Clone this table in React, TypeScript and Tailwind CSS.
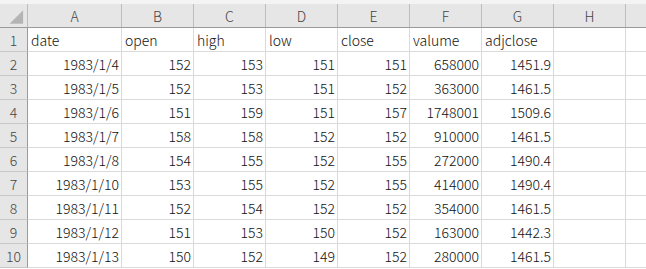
const COLS = ["A", "B", "C", "D", "E", "F", "G", "H", ""];
const WIDTHS = ["w-[94px]", "w-[72px]", "w-[72px]", "w-[72px]", "w-[72px]", "w-[72px]", "w-[72px]", "w-[72px]", "w-[40px]"];

const header = ["date", "open", "high", "low", "close", "valume", "adjclose"];

const rows: string[][] = [
  ["1983/1/4", "152", "153", "151", "151", "658000", "1451.9"],
  ["1983/1/5", "152", "153", "151", "152", "363000", "1461.5"],
  ["1983/1/6", "151", "159", "151", "157", "1748001", "1509.6"],
  ["1983/1/7", "158", "158", "152", "152", "910000", "1461.5"],
  ["1983/1/8", "154", "155", "152", "155", "272000", "1490.4"],
  ["1983/1/10", "153", "155", "152", "155", "414000", "1490.4"],
  ["1983/1/11", "152", "154", "152", "152", "354000", "1461.5"],
  ["1983/1/12", "151", "153", "150", "152", "163000", "1442.3"],
  ["1983/1/13", "150", "152", "149", "152", "280000", "1461.5"],
];

function RowHead({ n }: { n: number }) {
  return (
    <div className="w-[28px] shrink-0 h-[24px] bg-[#e6e6e6] border-r border-r-[#9b9b9b] border-b border-b-[#c8c8c8] flex items-center justify-center pt-[2px] text-[#444]">
      {n}
    </div>
  );
}

function Cell({ i, value, right }: { i: number; value?: string; right?: boolean }) {
  return (
    <div
      className={`${WIDTHS[i]} shrink-0 h-[24px] border-r border-b border-[#dadada] flex items-center pt-[2px] overflow-hidden whitespace-nowrap ${
        right ? "justify-end pr-[2px]" : "pl-[3px]"
      }`}
    >
      {value}
    </div>
  );
}

export default function App() {
  return (
    <div className="w-[646px] h-[269px] overflow-hidden bg-white text-[14px] font-light text-[#111] font-['Noto_Sans_CJK_JP',sans-serif]">
      <div className="h-[4px] bg-[#f4f4f4]" />
      <div className="flex h-[24px] bg-[#e6e6e6] border-b border-b-[#9b9b9b]">
        <div className="w-[28px] shrink-0 border-r border-r-[#bcbcbc] flex items-end justify-end">
          <svg width="28" height="23" viewBox="0 0 28 23">
            <polygon points="24,6 24,20 10,20" fill="#b4b4b4" />
          </svg>
        </div>
        {COLS.map((c, i) => (
          <div
            key={i}
            className={`${WIDTHS[i]} shrink-0 border-r border-r-[#bcbcbc] flex items-center justify-center pt-[2px] text-[#444]`}
          >
            {c}
          </div>
        ))}
      </div>
      <div className="flex">
        <RowHead n={1} />
        {COLS.map((_, i) => (
          <Cell key={i} i={i} value={header[i]} />
        ))}
      </div>
      {rows.map((r, ri) => (
        <div key={ri} className="flex">
          <RowHead n={ri + 2} />
          {COLS.map((_, i) => (
            <Cell key={i} i={i} value={r[i]} right />
          ))}
        </div>
      ))}
    </div>
  );
}
